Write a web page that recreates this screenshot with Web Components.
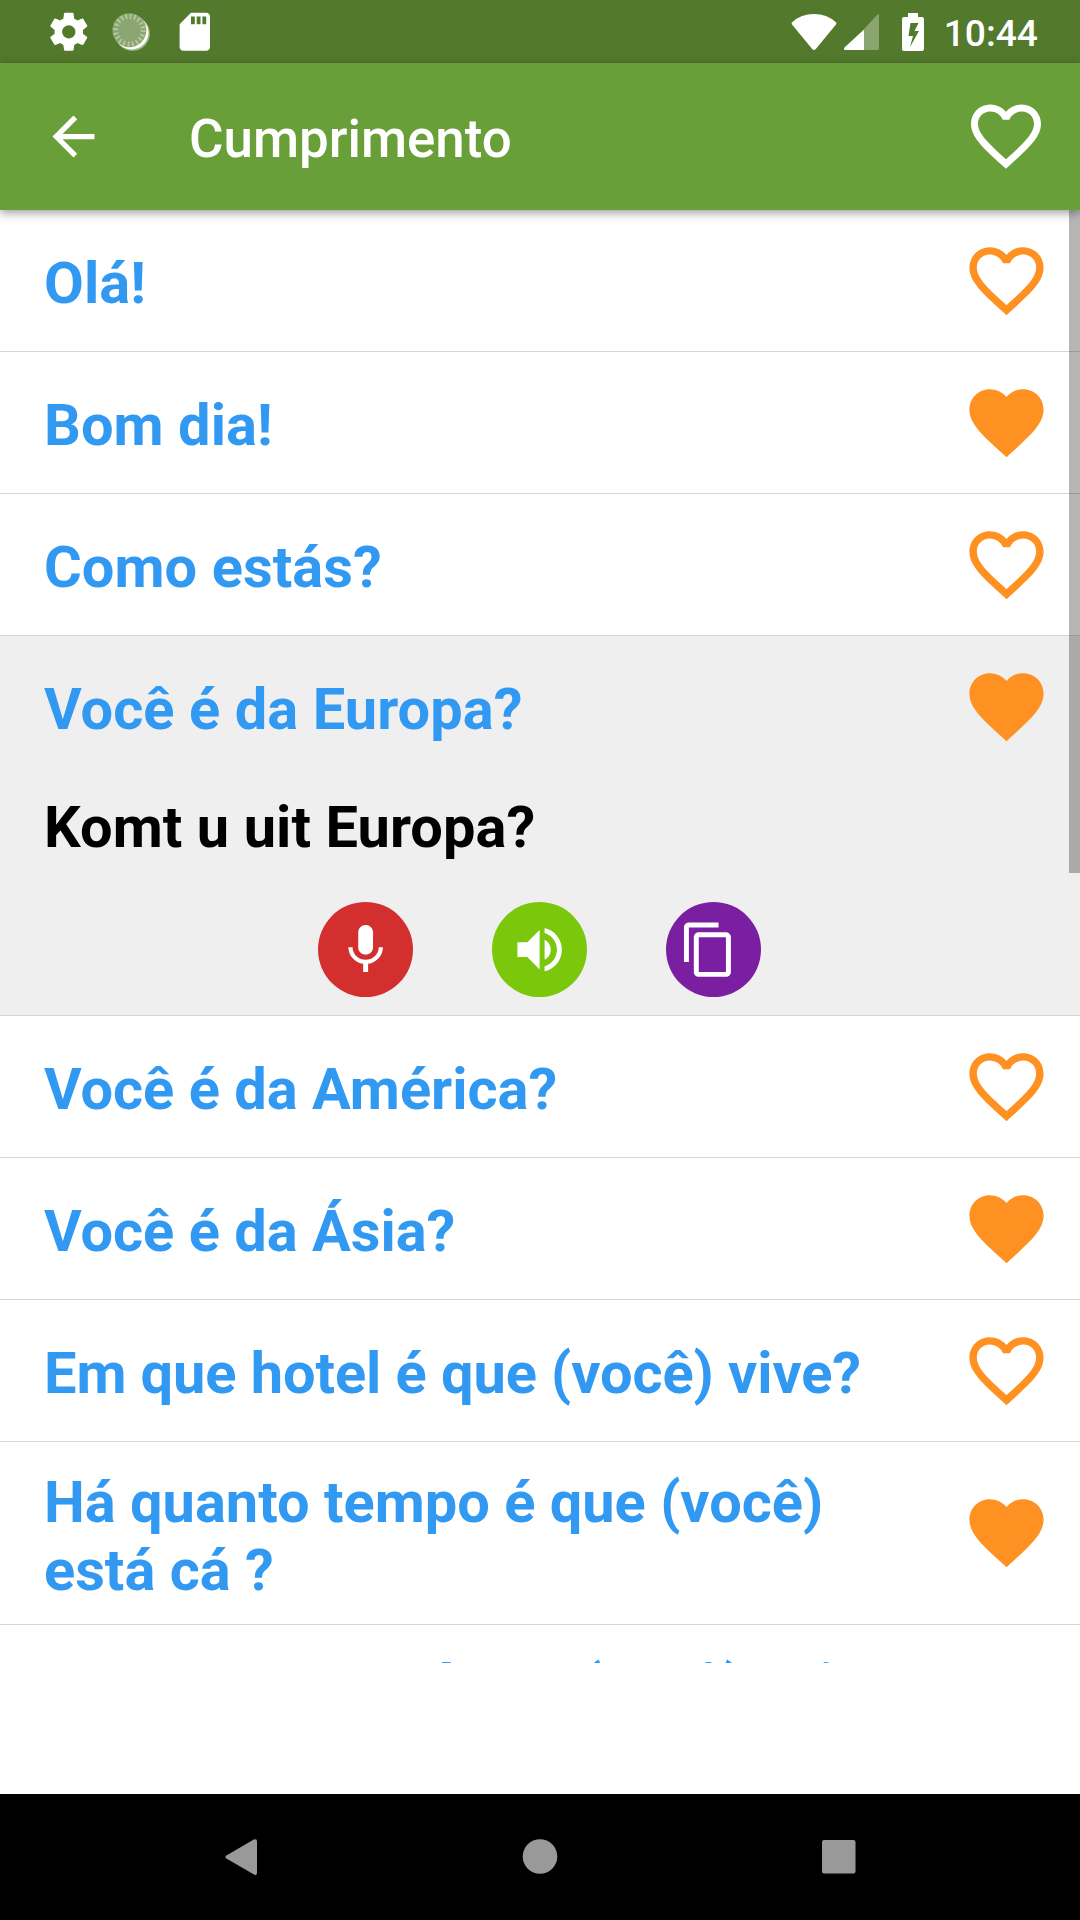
<!DOCTYPE html>
<html lang="pt">
<head>
<meta charset="utf-8">
<title>Cumprimento</title>
<style>
html,body{margin:0;padding:0;background:#fff}
body{width:1080px;height:1920px;overflow:hidden;font-family:Roboto,"Noto Sans",sans-serif}
</style>
</head>
<body>
<phrase-app></phrase-app>
<script>
const define = (name, html) => customElements.define(name, class extends HTMLElement {
  constructor() {
    super();
    this.attachShadow({ mode: 'open' });
  }
  connectedCallback() {
    if (this.shadowRoot.childNodes.length) return;
    const t = document.createElement('template');
    t.innerHTML = typeof html === 'function' ? html(this) : html;
    this.shadowRoot.append(t.content.cloneNode(true));
  }
});

const ICONS = {
  back: 'M20 11H7.83l5.59-5.59L12 4l-8 8 8 8 1.41-1.41L7.83 13H20v-2z',
  heart: 'M16.5 3c-1.74 0-3.41.81-4.5 2.09C10.91 3.81 9.24 3 7.5 3 4.42 3 2 5.42 2 8.5c0 3.78 3.4 6.86 8.55 11.54L12 21.35l1.45-1.32C18.6 15.36 22 12.28 22 8.5 22 5.42 19.58 3 16.5 3zm-4.4 15.55l-.1.1-.1-.1C7.14 14.24 4 11.39 4 8.5 4 6.5 5.5 5 7.5 5c1.54 0 3.04.99 3.57 2.36h1.87C13.46 5.99 14.96 5 16.5 5c2 0 3.5 1.5 3.5 3.5 0 2.89-3.14 5.74-7.9 10.05z',
  'heart-full': 'M12 21.35l-1.45-1.32C5.4 15.36 2 12.28 2 8.5 2 5.42 4.42 3 7.5 3c1.74 0 3.41.81 4.5 2.09C13.09 3.81 14.76 3 16.5 3 19.58 3 22 5.42 22 8.5c0 3.78-3.4 6.86-8.55 11.54L12 21.35z',
  mic: 'M12 14c1.66 0 2.99-1.34 2.99-3L15 5c0-1.66-1.34-3-3-3S9 3.34 9 5v6c0 1.66 1.34 3 3 3zm5.3-3c0 3-2.54 5.1-5.3 5.1S6.7 14 6.7 11H5c0 3.41 2.72 6.23 6 6.72V21h2v-3.28c3.28-.48 6-3.3 6-6.72h-1.7z',
  volume: 'M3 9v6h4l5 5V4L7 9H3zm13.5 3c0-1.77-1.02-3.29-2.5-4.03v8.05c1.48-.73 2.5-2.25 2.5-4.02zM14 3.23v2.06c2.89.86 5 3.54 5 6.71s-2.11 5.85-5 6.71v2.06c4.01-.91 7-4.49 7-8.77s-2.99-7.86-7-8.77z',
  copy: 'M16 1H4c-1.1 0-2 .9-2 2v14h2V3h12V1zm3 4H8c-1.1 0-2 .9-2 2v14c0 1.1.9 2 2 2h11c1.1 0 2-.9 2-2V7c0-1.1-.9-2-2-2zm0 16H8V7h11v14z',
  gear: 'M19.43 12.98c.04-.32.07-.64.07-.98s-.03-.66-.07-.98l2.11-1.65c.19-.15.24-.42.12-.64l-2-3.46c-.12-.22-.39-.3-.61-.22l-2.49 1c-.52-.4-1.08-.73-1.69-.98l-.38-2.65C14.46 2.18 14.25 2 14 2h-4c-.25 0-.46.18-.49.42l-.38 2.65c-.61.25-1.17.59-1.69.98l-2.49-1c-.23-.09-.49 0-.61.22l-2 3.46c-.13.22-.07.49.12.64l2.11 1.65c-.04.32-.07.65-.07.98s.03.66.07.98l-2.11 1.65c-.19.15-.24.42-.12.64l2 3.46c.12.22.39.3.61.22l2.49-1c.52.4 1.08.73 1.69.98l.38 2.65c.03.24.24.42.49.42h4c.25 0 .46-.18.49-.42l.38-2.65c.61-.25 1.17-.59 1.69-.98l2.49 1c.23.09.49 0 .61-.22l2-3.46c.12-.22.07-.49-.12-.64l-2.11-1.65zM12 15.5c-1.93 0-3.5-1.57-3.5-3.5s1.57-3.5 3.5-3.5 3.5 1.57 3.5 3.5-1.57 3.5-3.5 3.5z',
  sd: 'M18 2h-8L4.02 8 4 20c0 1.1.9 2 2 2h12c1.1 0 2-.9 2-2V4c0-1.1-.9-2-2-2zm-6 6h-2V4h2v4zm3 0h-2V4h2v4zm3 0h-2V4h2v4z'
};

define('md-icon', el => `
<style>:host{display:block;flex:none}svg{display:block;width:100%;height:100%;fill:currentColor}</style>
<svg viewBox="0 0 24 24"><path d="${ICONS[el.getAttribute('name')]}"/></svg>`);

define('status-bar', `
<style>
:host{display:flex;align-items:center;justify-content:space-between;height:63px;background:#52792c;color:#fff;box-sizing:border-box;padding:0 42px 0 45.5px;flex:none}
div{display:flex;align-items:center}
md-icon{width:45.6px;height:45.6px}
svg{display:block;flex:none}
.spin{margin:0 20.500px 0 20px}
.time{font-size:37.200px;font-weight:500;line-height:63px;height:63px;margin-top:4px;margin-left:20px}
</style>
<div>
  <md-icon name="gear"></md-icon>
  <svg class="spin" width="40" height="40" viewBox="0 0 40 40">
    <circle cx="21.500" cy="21.500" r="17.3" fill="#a5bb8d"/>
    <circle cx="20.400" cy="20.400" r="17" fill="#fff"/>
    <circle cx="18.400" cy="18.200" r="17" fill="#8ca673"/>
    <circle cx="18.400" cy="18.200" r="13.800" fill="none" stroke="#b9cba4" stroke-width="5" stroke-dasharray="1.6 2.735"/>
  </svg>
  <md-icon name="sd"></md-icon>
</div>
<div>
  <svg width="46" height="38" viewBox="0 0 46 38"><path fill="#fff" d="M1.2 9.2Q10 1 23 1t21.800 8.200q1 1 .2 2.200L24.800 36q-1.800 2-3.600 0L1 11.400q-.8-1.200.2-2.200z"/></svg>
  <svg style="margin-left:7px" width="35" height="36" viewBox="0 0 35 36"><path fill="#fff" fill-opacity=".33" d="M20 15L33 1q2-2 2 1v32q0 2-2 2H20z"/><path fill="#fff" d="M20 15.500V36H1.500q-2.500-.5-1-2.500z"/></svg>
  <svg style="margin-left:23px" width="22" height="38" viewBox="0 0 22 38"><path fill="#fff" fill-rule="evenodd" d="M6 0h10v4h4q2 0 2 2v30q0 2-2 2H2q-2 0-2-2V6q0-2 2-2h4zM8.500 10L6.500 23H11L8 34l9-16h-4.500l4-8z"/></svg>
  <span class="time">10:44</span>
</div>`);

define('app-bar', `
<style>
:host{display:flex;align-items:center;height:147px;background:#689f38;color:#fff;box-sizing:border-box;padding:0 32px 0 42px;position:relative;z-index:2;box-shadow:0 3px 9px rgba(0,0,0,.38);flex:none}
.back{width:63px;height:63px}
.fav{width:84px;height:84px;margin-top:-2px}
.title{flex:1;margin:4px 0 0 84px;font-size:52.900px;font-weight:500;line-height:62px}
</style>
<md-icon class="back" name="back"></md-icon>
<span class="title"><slot></slot></span>
<md-icon class="fav" name="heart"></md-icon>`);

define('round-button', el => `
<style>
:host{display:flex;align-items:center;justify-content:center;width:95px;height:95px;border-radius:50%;color:#fff;background:var(--fill)}
md-icon{width:59.300px;height:59.300px;margin-right:var(--shift,0)}
</style>
<md-icon name="${el.getAttribute('icon')}"></md-icon>`);

define('phrase-row', el => `
<style>
:host{display:block;border-bottom:1px solid #d5d7d6;flex:none}
:host([open]){background:#efefef}
.head{display:flex;align-items:center;height:141px;box-sizing:border-box;padding:0 29px 0 44px}
:host([lines="2"]) .head{height:182px}
.text{flex:1;padding:4px 30px 0 0;font-size:57.750px;font-weight:700;line-height:68px;letter-spacing:var(--track,.07px);color:#3199f1}
:host([lines="2"]) .text{padding-top:6px}
md-icon{width:89px;height:89px;color:#ff9122}
:host([lines="2"]) md-icon{margin-bottom:1px}
</style>
<div class="head"><span class="text"><slot></slot></span><md-icon name="${el.hasAttribute('fav') ? 'heart-full' : 'heart'}"></md-icon></div>
<slot name="detail"></slot>`);

define('phrase-detail', `
<style>
:host{display:flex;flex-direction:column;height:238px;box-sizing:border-box;padding-top:16px}
.text{padding-left:44px;font-size:57.750px;font-weight:700;line-height:68px;letter-spacing:.07px;color:#000}
.actions{display:flex;justify-content:center;gap:79px;margin-top:41px;padding-right:1px}
</style>
<span class="text"><slot></slot></span>
<div class="actions">
  <round-button icon="mic" style="--fill:#d32f2f"></round-button>
  <round-button icon="volume" style="--fill:#7ac70c"></round-button>
  <round-button icon="copy" style="--fill:#7b1fa2;--shift:10px"></round-button>
</div>`);

define('phrase-list', `
<style>
:host{display:flex;flex-direction:column;height:1453px;overflow:hidden;position:relative;flex:none;background:#fff}
i{position:absolute;right:0;top:0;width:11px;height:663px;background:rgba(0,0,0,.286)}
</style>
<slot></slot><i></i>`);

define('nav-bar', `
<style>
:host{display:flex;justify-content:center;align-items:center;gap:257px;height:126px;background:#000;flex:none;margin-top:auto;padding-right:1px}
svg{display:block;fill:#999;width:42px;height:42px}
</style>
<svg viewBox="0 0 42 42"><path d="M6.400 19.500L33.800 3.600Q37 2.200 37 5.500V37q0 3-3 1.500L6.400 22.500q-2-1.500 0-3z"/></svg>
<svg viewBox="0 0 42 42"><circle cx="21" cy="20.500" r="17.300"/></svg>
<svg viewBox="0 0 42 42"><rect x="4" y="4" width="33.500" height="33.500" rx="2"/></svg>`);

define('phrase-app', `
<style>:host{display:flex;flex-direction:column;width:1080px;height:1920px;background:#fff}</style>
<status-bar></status-bar>
<app-bar>Cumprimento</app-bar>
<phrase-list>
  <phrase-row>Olá!</phrase-row>
  <phrase-row fav>Bom dia!</phrase-row>
  <phrase-row>Como estás?</phrase-row>
  <phrase-row fav open>Você é da Europa?<phrase-detail slot="detail">Komt u uit Europa?</phrase-detail></phrase-row>
  <phrase-row style="--track:0">Você é da América?</phrase-row>
  <phrase-row fav style="--track:0">Você é da Ásia?</phrase-row>
  <phrase-row style="--track:-.08px">Em que hotel é que (você) vive?</phrase-row>
  <phrase-row fav lines="2" style="--track:0">Há quanto tempo é que (você) está cá ?</phrase-row>
  <phrase-row lines="2" style="--track:0">Quanto tempo é que (você) vai ficar?</phrase-row>
</phrase-list>
<nav-bar></nav-bar>`);
</script>
</body>
</html>
